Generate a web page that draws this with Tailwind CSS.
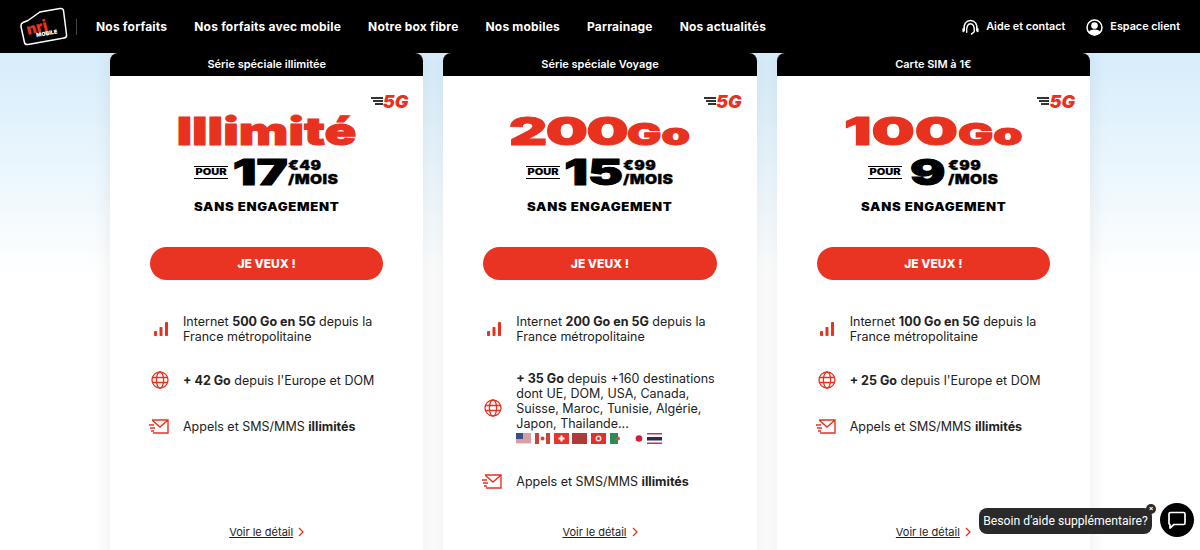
<!DOCTYPE html>
<html lang="fr">
<head>
    <meta charset="UTF-8">
    <meta name="viewport" content="width=device-width, initial-scale=1.0">
    <title>NRJ Mobile - Nos forfaits</title>
    <script src="https://cdn.jsdelivr.net/npm/@tailwindcss/browser@4"></script>
</head>
<body class="h-[550px] overflow-hidden bg-white font-['Inter',sans-serif] text-[#222]">
    <header class="relative z-10 flex h-[53px] items-center bg-black pl-5 pr-5 text-white">
        <svg width="48" height="40" viewBox="0 0 48 40" class="shrink-0">
            <path d="M8 13 L20 4.500 L40 1 Q43 .6 43.500 3 L46.500 27 Q47 30 44 30.500 L8 37 Q5 37.500 4.500 35 L1 19 Q.6 16 3 15 Z" transform="translate(0 .5)" fill="#000" stroke="#fff" stroke-width="1.500"/>
            <text x="7" y="25" transform="rotate(-14 20 22)" font-family="Inter" font-weight="900" font-size="15" fill="#e8321f">nrj</text>
            <text x="16" y="28" transform="rotate(-10 28 26)" font-family="Inter" font-weight="900" font-size="5.500" fill="#fff">MOBILE</text>
        </svg>
        <div class="ml-[8px] h-[16px] w-px bg-[#444]"></div>
        <nav class="ml-[19px] flex gap-[27px] text-[12px] font-bold tracking-[.2px]">
            <a>Nos forfaits</a>
            <a>Nos forfaits avec mobile</a>
            <a>Notre box fibre</a>
            <a>Nos mobiles</a>
            <a>Parrainage</a>
            <a>Nos actualités</a>
        </nav>
        <div class="ml-auto flex items-center gap-[21px] pt-[1px] text-[10.800px] font-semibold">
            <a class="flex items-center gap-[7px]">
                <svg width="17" height="17" viewBox="0 0 18 18" fill="none" stroke="#fff" stroke-width="1.500" stroke-linecap="round">
                    <path d="M2.500 12 C1 5 5 1.500 9 1.500 S17 5 15.500 12"/>
                    <path d="M5 14 C4.500 7.500 6.500 5 9 5 S13.500 7.500 13 13.500 L10 16"/>
                    <path d="M1.500 10.500 V13 M16.500 10.500 V13" stroke-width="2.200"/>
                </svg>
                Aide et contact
            </a>
            <a class="flex items-center gap-[7px]">
                <svg width="17" height="17" viewBox="0 0 17 17" fill="none" stroke="#fff" stroke-width="1.500">
                    <circle cx="8.500" cy="8.500" r="7.500"/>
                    <circle cx="8.500" cy="6.500" r="2.600" fill="#fff"/>
                    <path d="M3.500 13.500 C4.500 10.500 12.500 10.500 13.500 13.500 L8.500 16 Z" fill="#fff"/>
                </svg>
                Espace client
            </a>
        </div>
    </header>

    <main class="h-[497px] overflow-hidden bg-linear-to-b from-[#d6edfb] to-white to-45%">
        <div id="cards" class="ml-[110px] grid w-[980px] grid-cols-3 gap-[20px]"></div>
    </main>

    <!-- bulle d'aide -->
    <div class="absolute bottom-[16px] left-[979px] flex h-[26px] w-[173px] items-center justify-center rounded-[8px] bg-[#2a2a2a] font-['Roboto',sans-serif] text-[12.200px] whitespace-nowrap text-white">
        Besoin d'aide supplémentaire?
        <span class="absolute top-[-4px] right-[-4px] flex h-[10px] w-[10px] items-center justify-center rounded-full bg-[#2a2a2a] text-[8px] leading-none font-bold">×</span>
    </div>
    <div class="absolute bottom-[13px] left-[1160px] flex h-[34px] w-[34px] items-center justify-center rounded-full bg-black">
        <svg width="20" height="20" viewBox="0 0 20 20" fill="none" stroke="#fff" stroke-width="1.700" stroke-linejoin="round">
            <path d="M3.500 2.500 H16.500 Q18 2.500 18 4 V13 Q18 14.500 16.500 14.500 H7 L3 18 L3 14.500 Q2 14.500 2 13 V4 Q2 2.500 3.500 2.500 Z"/>
        </svg>
    </div>

    <script>
        const bars = `<svg width="14" height="14" viewBox="0 0 14 14" fill="#e8321f"><rect x="0" y="9" width="3" height="5" rx=".8"/><rect x="5.500" y="5" width="3" height="9" rx=".8"/><rect x="11" y="0" width="3" height="14" rx=".8"/></svg>`;
        const globe = `<svg width="18" height="18" viewBox="0 0 18 18" fill="none" stroke="#e8321f" stroke-width="1.300"><circle cx="9" cy="9" r="8"/><ellipse cx="9" cy="9" rx="3.600" ry="8"/><path d="M1.500 6.500 H16.500 M1.500 11.500 H16.500"/></svg>`;
        const mail = `<svg width="20" height="15" viewBox="0 0 20 15" fill="none" stroke="#e8321f" stroke-width="1.400"><path d="M3 1 H19 V14 H4 M3.500 1.500 L11 8 L18.500 1.500"/><path d="M0 6 H5 M1 9 H6 M2 12 H5"/></svg>`;
        const flags = `<div class="mt-[2px] flex h-[11px] gap-[3.700px]">
            <svg width="15" height="11"><rect width="15" height="11" fill="#e9dcdc"/><path d="M0 1h15M0 3h15M0 5h15M0 7h15M0 9h15" stroke="#c9616a" stroke-width="1"/><rect width="7" height="6" fill="#3c4f86"/></svg>
            <svg width="15" height="11"><rect width="15" height="11" fill="#fff"/><rect width="4" height="11" fill="#c8433a"/><rect x="11" width="4" height="11" fill="#c8433a"/><circle cx="7.500" cy="5.500" r="2" fill="#d0443a"/></svg>
            <svg width="15" height="11"><rect width="15" height="11" fill="#e8352b"/><path d="M7.500 2.500v6M4.500 5.500h6" stroke="#fff" stroke-width="2"/></svg>
            <svg width="15" height="11"><rect width="15" height="11" fill="#b23a36"/><circle cx="7.500" cy="5.500" r="1.500" fill="#6d5a35"/></svg>
            <svg width="15" height="11"><rect width="15" height="11" fill="#e4302a"/><circle cx="7.500" cy="5.500" r="3" fill="#f6dcd8"/><circle cx="7.500" cy="5.500" r="1.500" fill="#e4302a"/></svg>
            <svg width="15" height="11"><rect width="8" height="11" fill="#2c8c55"/><circle cx="8" cy="5.500" r="2" fill="#df4a44"/></svg>
            <svg width="15" height="11"><circle cx="11" cy="5.500" r="3.300" fill="#d81e3a"/></svg>
            <svg width="15" height="11"><rect width="15" height="11" fill="#fff"/><rect y="4" width="15" height="3.500" fill="#2d2a5a"/><rect y="0" width="15" height="1.500" fill="#c2364a"/><rect y="9.500" width="15" height="1.500" fill="#c2364a"/></svg>
        </div>`;

        const plans = [
            {
                tag: 'Série spéciale illimitée',
                title: `<span class="inline-block scale-x-[1.35] text-[39px]">Illimité</span>`,
                euros: '17', cents: '49',
                internet: '500 Go',
                roam: `<span class="font-bold">+ 42 Go</span> depuis l'Europe et DOM`,
                roamClass: 'h-[30px]',
                gap: 'h-[83px]'
            },
            {
                tag: 'Série spéciale Voyage',
                title: `<span class="inline-block scale-x-[1.52] tracking-[-1px]">200<span class="text-[30px] tracking-normal">Go</span></span>`,
                euros: '15', cents: '99',
                internet: '200 Go',
                roam: `<span class="font-bold">+ 35 Go</span> depuis +160 destinations dont UE, DOM, USA, Canada, Suisse, Maroc, Tunisie, Algérie, Japon, Thailande...` + flags,
                roamClass: 'h-[85px]',
                gap: 'h-[28px]'
            },
            {
                tag: 'Carte SIM à 1€',
                title: `<span class="inline-block scale-x-[1.56]">100<span class="text-[30px]">Go</span></span>`,
                euros: '9', cents: '99',
                internet: '100 Go',
                roam: `<span class="font-bold">+ 25 Go</span> depuis l'Europe et DOM`,
                roamClass: 'h-[30px]',
                gap: 'h-[83px]'
            }
        ];

        document.getElementById('cards').innerHTML = plans.map(plan => `
            <article class="h-[520px] rounded-t-[8px] bg-white shadow-[0_0_20px_rgba(0,0,0,.08)]">
                <div class="flex h-[23px] items-center justify-center rounded-t-[8px] bg-black text-[11px] font-semibold text-white">${plan.tag}</div>
                <div class="mt-[16px] flex h-[16px] items-center justify-end pt-[2px] pr-[15px]">
                    <span class="flex items-center text-[18px] font-black text-[#e8321f] italic">
                        <span class="flex flex-col items-end gap-[1.500px]">
                            <i class="block h-[1.500px] w-[12px] bg-[#333]"></i><i class="block h-[1.500px] w-[10px] bg-[#333]"></i><i class="block h-[1.500px] w-[8px] bg-[#333]"></i>
                        </span>5G
                    </span>
                </div>
                <h2 class="flex h-[46px] items-center justify-center text-[39px] font-black text-[#e8321f] [-webkit-text-stroke:1px_#e8321f]">${plan.title}</h2>
                <div class="flex h-[36px] items-center justify-center text-black">
                    <span class="mr-[5px] flex w-[34px] justify-center border-y-[1.500px] border-black"><span class="inline-block scale-x-[1.3] text-[8.500px] leading-[11px] font-black">POUR</span></span>
                    <span class="inline-block scale-x-[1.5] px-[9px] text-[35px] leading-none font-black [-webkit-text-stroke:1px_#000]">${plan.euros}</span>
                    <span class="flex w-[51px] origin-left scale-x-[1.2] flex-col text-[13px] leading-[14px] font-black tracking-[.3px] [-webkit-text-stroke:.3px_#000]"><span>€${plan.cents}</span><span>/MOIS</span></span>
                </div>
                <p class="mt-[10px] text-center text-[11.500px] leading-[14px] font-black tracking-[.6px] text-black"><span class="inline-block scale-x-[1.14]">SANS ENGAGEMENT</span></p>
                <div class="mt-[33px] px-[40px]">
                    <a class="flex h-[33px] items-center justify-center rounded-full bg-[#ea3423] text-[12px] font-extrabold text-white">JE VEUX !</a>
                </div>
                <ul class="mt-[33px] text-[12.500px] leading-[15px] text-[#222]">
                    <li class="flex h-[32px] items-center">
                        <div class="flex w-[73px] shrink-0 justify-center pl-[28px]">${bars}</div>
                        <p class="w-[205px]">Internet <span class="font-bold">${plan.internet} en 5G</span> depuis la France métropolitaine</p>
                    </li>
                    <li class="mt-[20px] flex items-center ${plan.roamClass}">
                        <div class="flex w-[73px] shrink-0 justify-center pl-[27px]">${globe}</div>
                        <div class="w-[205px]">${plan.roam}</div>
                    </li>
                    <li class="mt-[16px] flex h-[30px] items-center">
                        <div class="flex w-[73px] shrink-0 justify-center pl-[25px]">${mail}</div>
                        <p class="w-[205px]">Appels et SMS/MMS <span class="font-bold">illimités</span></p>
                    </li>
                </ul>
                <div class="${plan.gap}"></div>
                <a class="flex items-center justify-center gap-[5px] text-[11px] text-[#222]">
                    <span class="underline">Voir le détail</span>
                    <svg width="6" height="10" viewBox="0 0 6 10" fill="none" stroke="#e8321f" stroke-width="1.300"><path d="M1 1 L5 5 L1 9"/></svg>
                </a>
            </article>
        `).join('');
    </script>
</body>
</html>
